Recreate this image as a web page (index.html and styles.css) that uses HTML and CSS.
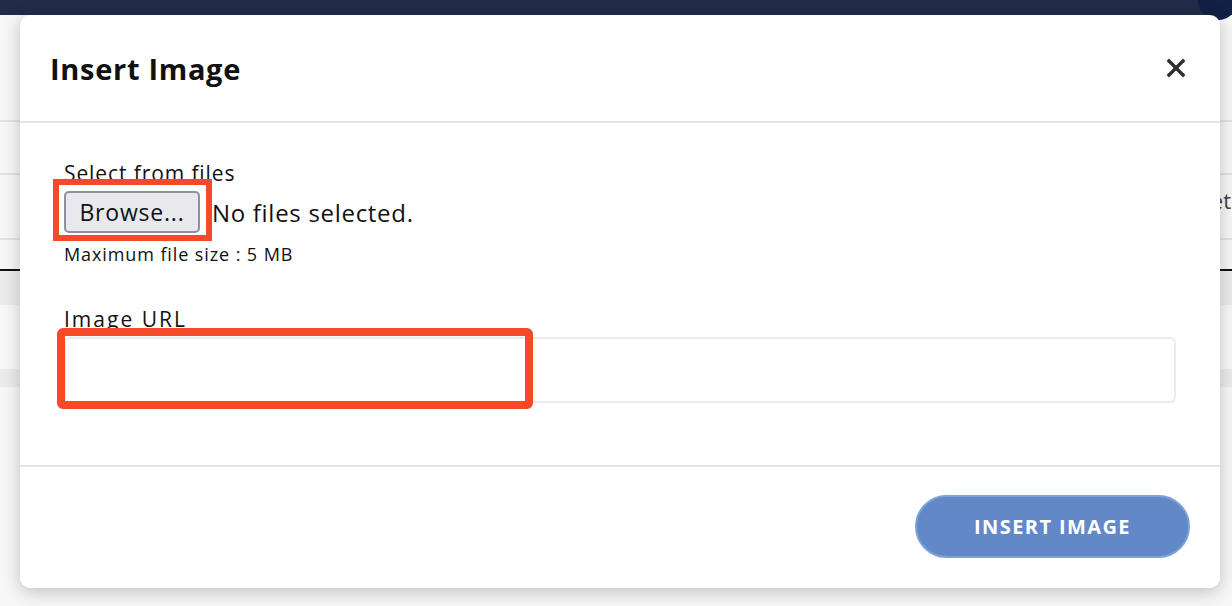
FILE: index.html
```html
<!DOCTYPE html>
<html lang="en">
<head>
    <meta charset="UTF-8">
    <meta name="viewport" content="width=device-width, initial-scale=1.0">
    <title>Insert Image</title>
    <link rel="stylesheet" href="styles.css">
</head>
<body>
    <div class="page">
        <div class="topbar"><span class="avatar"></span></div>
        <div class="page-body">
            <div class="row row-head"></div>
            <div class="row row-a"></div>
            <div class="row row-b"><span class="row-text">Set</span></div>
            <div class="row row-c"></div>
            <div class="row row-band"></div>
            <div class="row row-light"></div>
            <div class="row row-band2"></div>
        </div>
    </div>

    <div class="modal">
        <div class="modal-header">
            <h2>Insert Image</h2>
            <button class="close-btn" aria-label="Close">
                <svg width="20" height="20" viewBox="0 0 20 20">
                    <path d="M3 3 L17 17 M17 3 L3 17" stroke="#2f2f2f" stroke-width="3.4" stroke-linecap="square"/>
                </svg>
            </button>
        </div>

        <div class="modal-body">
            <div class="field-label">Select from files</div>
            <div class="file-row">
                <button class="browse-btn">Browse...</button>
                <span class="file-status">No files selected.</span>
            </div>
            <div class="hint">Maximum file size : 5 MB</div>

            <div class="field-label url-label">Image URL</div>
            <input type="text" class="url-input">

            <div class="mark mark-browse"></div>
            <div class="mark mark-url"></div>
        </div>

        <div class="modal-footer">
            <button class="insert-btn">INSERT IMAGE</button>
        </div>
    </div>
</body>
</html>
```

FILE: styles.css
```css
body {
    margin: 0;
    font-family: "Open Sans", "Noto Sans", sans-serif;
    background-color: #f7f7f7;
    color: #111;
    overflow: hidden;
}
.page {
    height: 606px;
}
.topbar {
    height: 15px;
    background-color: #212c49;
    position: relative;
}
.avatar {
    position: absolute;
    right: -6px;
    top: -20px;
    width: 40px;
    height: 40px;
    border-radius: 50%;
    background-color: #132046;
}
.row {
    border-bottom: 2px solid #e2e2e2;
}
.row-head {
    height: 105px;
}
.row-a {
    height: 51px;
}
.row-b {
    height: 63px;
    text-align: right;
}
.row-text {
    display: inline-block;
    margin-top: 10px;
    margin-right: 1px;
    font-size: 22px;
    line-height: 30px;
    color: #444;
}
.row-c {
    height: 29px;
    border-bottom: 2px solid #111;
}
.row-band {
    height: 34px;
    background-color: #ececec;
    border-bottom: none;
}
.row-light {
    height: 64px;
    background-color: #f8f8f8;
    border-bottom: none;
}
.row-band2 {
    height: 18px;
    background-color: #ececec;
    border-bottom: none;
}

.modal {
    position: absolute;
    top: 15px;
    left: 20px;
    width: 1200px;
    height: 573px;
    background: #fff;
    border-radius: 10px;
    box-shadow: 0 4px 18px rgba(0, 0, 0, 0.22);
    display: flex;
    flex-direction: column;
}
.modal-header {
    height: 106px;
    padding: 0 34px 0 30px;
    display: flex;
    align-items: center;
    justify-content: space-between;
    border-bottom: 2px solid #e4e4e4;
}
.modal-header h2 {
    margin: 0;
    font-size: 29px;
    font-weight: bold;
    letter-spacing: 0.7px;
    color: #111;
}
.close-btn {
    border: none;
    background: none;
    padding: 0;
    cursor: pointer;
    display: flex;
}

.modal-body {
    position: relative;
    padding: 38px 44px 62px 44px;
    border-bottom: 2px solid #e4e4e4;
}
.field-label {
    font-size: 21px;
    line-height: 24px;
    letter-spacing: 0.9px;
    color: #111;
}
.file-row {
    margin-top: 6px;
    display: flex;
    align-items: center;
    gap: 12px;
}
.browse-btn {
    height: 42px;
    width: 136px;
    font-family: inherit;
    font-size: 23px;
    letter-spacing: 0.8px;
    color: #111;
    background-color: #e9e9ed;
    border: 2px solid #8f8f9d;
    border-radius: 5px;
    padding: 0;
}
.file-status {
    font-size: 24px;
    letter-spacing: 0.7px;
}
.hint {
    margin-top: 11px;
    font-size: 18px;
    line-height: 20px;
    letter-spacing: 0.9px;
}
.url-label {
    margin-top: 43px;
    letter-spacing: 2px;
}
.url-input {
    display: block;
    box-sizing: border-box;
    margin-top: 6px;
    width: 100%;
    height: 66px;
    border: 2px solid #ebebeb;
    border-radius: 6px;
}
.mark {
    position: absolute;
    box-sizing: border-box;
    border-style: solid;
    border-color: #f44a27;
}
.mark-browse {
    top: 56px;
    left: 33px;
    width: 159px;
    height: 62px;
    border-width: 6px;
}
.mark-url {
    top: 205px;
    left: 37px;
    width: 476px;
    height: 81px;
    border-width: 8px;
    border-radius: 6px;
}

.modal-footer {
    flex: 1;
    display: flex;
    justify-content: flex-end;
    align-items: flex-start;
    padding: 28px 30px 0 0;
}
.insert-btn {
    width: 275px;
    height: 63px;
    border-radius: 32px;
    background-color: #6388c8;
    border: 2px solid #7aa3d6;
    color: #fff;
    font-family: inherit;
    font-size: 20px;
    font-weight: bold;
    letter-spacing: 1.4px;
    cursor: pointer;
}
```
